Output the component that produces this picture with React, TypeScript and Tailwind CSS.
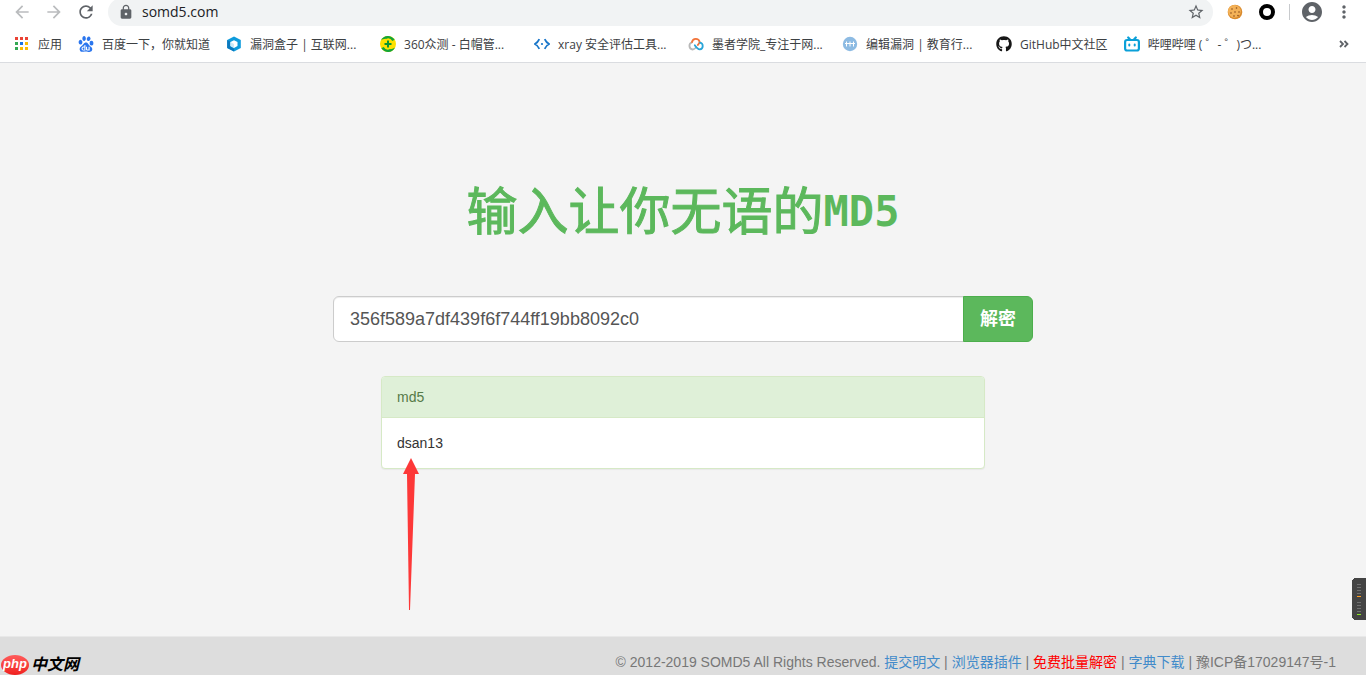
import { useState } from 'react';
import type { FormEvent, ReactNode } from 'react';
import { FaGithub } from 'react-icons/fa';
import { MdAccountCircle, MdArrowBack, MdArrowForward, MdLock, MdMoreVert, MdRefresh, MdStarBorder } from 'react-icons/md';
import { SiBaidu } from 'react-icons/si';

type Bookmark = {
  label: string;
  icon: ReactNode;
  clipped?: boolean;
};

const AppsIcon = () => (
  <svg viewBox="0 0 16 16" className="size-4" shapeRendering="crispEdges">
    <path fill="#ea4335" d="M1 1h3v3H1zM6 1h3v3H6zM11 1h3v3h-3z" />
    <path fill="#34a853" d="M1 6h3v3H1zM1 11h3v3H1z" />
    <path fill="#1a73e8" d="M6 6h3v3H6z" />
    <path fill="#fbbc04" d="M11 6h3v3h-3zM6 11h3v3H6zM11 11h3v3h-3z" />
  </svg>
);

const HexIcon = () => (
  <svg viewBox="0 0 16 16" className="size-4">
    <path fill="#0e9bdc" d="M8 .5 14.8 4v8L8 15.6 1.2 12V4z" />
    <path fill="#0b78bd" d="M8 15.6 1.2 12V4L4 5.6v4.9l4 2.2z" />
    <path fill="#fff" d="M8 4.300 11.500 6v4L8 11.900 4.500 10V6z" />
    <path fill="#c9e9f8" d="M8 8v3.900L4.500 10V6z" />
  </svg>
);

const Icon360 = () => (
  <svg viewBox="0 0 16 16" className="size-4">
    <circle cx="8" cy="8" r="8" fill="#fde100" />
    <path fill="#13a538" d="M.9 4.400A8 8 0 0 1 14.700 3.700L12.300 5A5 5 0 0 0 6 2.900C4 2.700 2.200 3.500.9 4.400zM15.100 11.600A8 8 0 0 1 1.300 12.300L3.700 11a5 5 0 0 0 6.300 2.100c2 .2 3.800-.6 5.100-1.500z" />
    <path fill="#079534" d="M7 4.500h2V7h2.500v2H9v2.500H7V9H4.500V7H7z" />
  </svg>
);

const XrayIcon = () => (
  <svg viewBox="0 0 16 16" className="size-4" fill="none" stroke="#1976c9" strokeWidth="1.8">
    <path d="M5.300 3.200Q4 6.300.9 8q3.100 1.700 4.400 4.800M10.700 3.200Q12 6.300 15.100 8q-3.100 1.700-4.400 4.800" />
    <circle cx="8" cy="8" r="1.1" fill="#1976c9" stroke="none" />
  </svg>
);

const MozheIcon = () => (
  <svg viewBox="0 0 16 16" className="size-4" fill="none" strokeWidth="1.8" strokeLinecap="round">
    <path stroke="#b8b8b8" d="M4 6.300A3.700 3.700 0 0 0 4.700 13.500Q6.500 13.300 8 11.500" />
    <path stroke="#f2743a" d="M4 6a3.900 3.900 0 0 1 7.600-.2Q11.500 7.500 9.800 9" />
    <path stroke="#2aa5d8" d="M12 6.700a3.400 3.400 0 0 1-.2 6.700Q9.500 13.200 6.800 9.200" />
  </svg>
);

const EduIcon = () => (
  <svg viewBox="0 0 16 16" className="size-4">
    <circle cx="8" cy="8" r="7.2" fill="#8dbbe3" />
    <path stroke="#fff" strokeWidth="1" d="M4.500 5.500v5M8 5.500v5M11.500 5.500v5M3 7.500h10" />
  </svg>
);

const BilibiliIcon = () => (
  <svg viewBox="0 0 16 16" className="size-4" fill="none" stroke="#0ba0d8" strokeWidth="2.2" strokeLinecap="round">
    <rect x="1.1" y="4" width="13.800" height="10.500" rx="2" />
    <path d="m4.200 1.500 1.500 1.500M11.800 1.500 10.300 3" />
    <path strokeWidth="2" d="M5.300 8.500v1M10.700 8.500v1" />
  </svg>
);

const CookieIcon = () => (
  <svg viewBox="0 0 16 16" className="size-4">
    <circle cx="8" cy="8" r="7.300" fill="#d98a2c" />
    <circle cx="7.400" cy="7.300" r="6.400" fill="#f3b157" />
    <g fill="#8a4d1c">
      <circle cx="5" cy="5" r=".8" />
      <circle cx="9.500" cy="4" r=".8" />
      <circle cx="8" cy="8" r=".8" />
      <circle cx="4" cy="9" r=".8" />
      <circle cx="12" cy="8" r=".8" />
      <circle cx="7" cy="12" r=".8" />
      <circle cx="11" cy="11.500" r=".8" />
    </g>
  </svg>
);

const bookmarks: Bookmark[] = [
  { label: '应用', icon: <AppsIcon /> },
  { label: '百度一下，你就知道', icon: <SiBaidu className="size-4 text-[#2b76ee]" /> },
  { label: '漏洞盒子 | 互联网...', icon: <HexIcon />, clipped: true },
  { label: '360众测 - 白帽管...', icon: <Icon360 />, clipped: true },
  { label: 'xray 安全评估工具...', icon: <XrayIcon />, clipped: true },
  { label: '墨者学院_专注于网...', icon: <MozheIcon />, clipped: true },
  { label: '编辑漏洞 | 教育行...', icon: <EduIcon />, clipped: true },
  { label: 'GitHub中文社区', icon: <FaGithub className="size-4 text-[#171717]" /> },
  { label: '哔哩哔哩 ( ゜- ゜)つ...', icon: <BilibiliIcon />, clipped: true },
];

const footerLinks = [
  { label: '提交明文', className: 'text-[#428bca]' },
  { label: '浏览器插件', className: 'text-[#428bca]' },
  { label: '免费批量解密', className: 'text-[#ff0000]' },
  { label: '字典下载', className: 'text-[#428bca]' },
];

const BrowserBar = () => (
  <header className="overflow-hidden border-b border-[#dadce0] bg-white font-['Open_Sans','Noto_Sans_CJK_SC',sans-serif] text-[#3c4043]">
    <div className="-mt-0.5 flex h-7 items-center pr-3">
      <nav className="flex w-[108px] shrink-0 items-center gap-3 pl-3">
        <button type="button" aria-label="后退">
          <MdArrowBack className="size-5 text-[#babcbe]" />
        </button>
        <button type="button" aria-label="前进">
          <MdArrowForward className="size-5 text-[#babcbe]" />
        </button>
        <button type="button" aria-label="刷新">
          <MdRefresh className="size-5 text-[#5f6368]" />
        </button>
      </nav>
      <div className="flex h-7 min-w-0 flex-1 items-center gap-2 rounded-full bg-[#f1f3f4] pr-2 pl-2.5">
        <MdLock className="size-4 shrink-0 text-[#5f6368]" />
        <input aria-label="地址" defaultValue="somd5.com" className="min-w-0 flex-1 bg-transparent text-sm text-[#202124] outline-none" />
        <button type="button" aria-label="收藏">
          <MdStarBorder className="size-[18px] text-[#5f6368]" />
        </button>
      </div>
      <div className="flex shrink-0 items-center pl-3.5">
        <button type="button" aria-label="Cookie">
          <CookieIcon />
        </button>
        <button type="button" aria-label="扩展程序" className="ml-4 size-4 rounded-full border-4 border-black bg-white" />
        <span className="ml-3.5 h-4 w-px bg-[#c8cacd]" />
        <button type="button" aria-label="用户" className="ml-2.5">
          <MdAccountCircle className="size-6 text-[#5f6368]" />
        </button>
        <button type="button" aria-label="菜单" className="ml-2.5">
          <MdMoreVert className="size-5 text-[#5f6368]" />
        </button>
      </div>
    </div>
    <nav className="flex h-9 items-center gap-4 pr-4 pl-3.5 text-xs">
      {bookmarks.map((bookmark) => (
        <a
          key={bookmark.label}
          href="#"
          className={`flex shrink-0 items-center gap-2 whitespace-nowrap ${bookmark.clipped ? 'w-[138px]' : ''}`}
        >
          {bookmark.icon}
          <span className="pt-0.5">{bookmark.label}</span>
        </a>
      ))}
      <button type="button" aria-label="更多书签" className="ml-auto">
        <svg viewBox="0 0 12 12" className="size-3" fill="none" stroke="#5f6368" strokeWidth="1.800">
          <path d="m2 3 3 3-3 3M6.500 3l3 3-3 3" />
        </svg>
      </button>
    </nav>
  </header>
);

const RedArrow = () => (
  <svg viewBox="0 0 18 154" className="pointer-events-none absolute top-full left-1 mt-1 h-[154px] w-[18px]">
    <path fill="#fd3838" d="M10 1 18 17h-4L9 153H8L6 17H2z" />
  </svg>
);

const SideMeter = () => (
  <svg viewBox="0 0 14 42" className="fixed top-[578px] right-0 h-[42px] w-3.5" shapeRendering="crispEdges">
    <path fill="#444" d="M2 0h12v42H2L0 40V2z" />
    <path stroke="#707070" d="M5 6.500h4M5 9.500h4M5 12.500h4M5 15.500h4M5 24.500h4M5 27.500h4M5 30.500h4M5 33.500h4" />
    <path stroke="#ff9d1e" d="M5 18.500h4" />
    <path stroke="#8ae822" d="M5 36.500h4" />
  </svg>
);

export default function App() {
  const [hash, setHash] = useState('356f589a7df439f6f744ff19bb8092c0');

  const handleSubmit = (event: FormEvent) => {
    event.preventDefault();
  };

  return (
    <div className="flex min-h-screen flex-col bg-[#f4f4f4] font-['Liberation_Sans','Noto_Sans_CJK_SC',sans-serif] text-sm text-[#333]">
      <BrowserBar />

      <main className="flex-1 px-4 pt-[115px]">
        <h1 className="flex items-center justify-center font-['Noto_Sans_CJK_SC',sans-serif] text-[51px] leading-15 text-[#5cb85c]">
          <span className="[-webkit-text-stroke:1px_#5cb85c]">输入让你无语的</span>
          <span className="pt-2 font-['DejaVu_Sans_Mono',monospace] text-[42px] leading-13 font-bold">MD5</span>
        </h1>

        <form onSubmit={handleSubmit} className="mx-auto mt-[58px] flex max-w-[700px]">
          <input
            aria-label="MD5"
            value={hash}
            onChange={(event) => setHash(event.target.value)}
            className="h-[46px] min-w-0 flex-1 rounded-l-md border border-[#ccc] bg-white px-4 text-lg text-[#555] shadow-[inset_0_1px_1px_rgba(0,0,0,0.075)] outline-none"
          />
          <button type="submit" className="-ml-px h-[46px] rounded-r-md border border-[#4cae4c] bg-[#5cb85c] px-4 text-lg font-bold text-white">
            解密
          </button>
        </form>

        <section className="mx-auto mt-8.5 max-w-[604px] rounded border border-[#d6e9c6] bg-white shadow-[0_1px_1px_rgba(0,0,0,0.05)]">
          <h2 className="rounded-t-[3px] border-b border-[#d6e9c6] bg-[#dff0d8] px-[15px] py-2.5 leading-5 text-[#567a48]">md5</h2>
          <div className="p-[15px] leading-5">
            <span className="relative inline-block">
              dsan13
              <RedArrow />
            </span>
          </div>
        </section>
      </main>

      <footer className="flex h-[39px] items-end justify-between border-t border-[#e8e8e8] bg-[#ddd] text-[#777]">
        <a href="#" className="flex items-center gap-0.5 pl-px text-base leading-5 font-bold text-black italic">
          <span className="flex h-5 w-7 items-center justify-center rounded-[50%] bg-linear-to-b from-[#ff5a5a] to-[#f01c1c] pb-0.5 text-[13px] text-white">
            php
          </span>
          中文网
        </a>
        <p className="pr-[30px] pb-[3px] leading-5">
          © 2012-2019 SOMD5 All Rights Reserved.{' '}
          {footerLinks.map((link) => (
            <span key={link.label}>
              <a href="#" className={link.className}>
                {link.label}
              </a>
              {' | '}
            </span>
          ))}
          豫ICP备17029147号-1
        </p>
      </footer>

      <SideMeter />
    </div>
  );
}
